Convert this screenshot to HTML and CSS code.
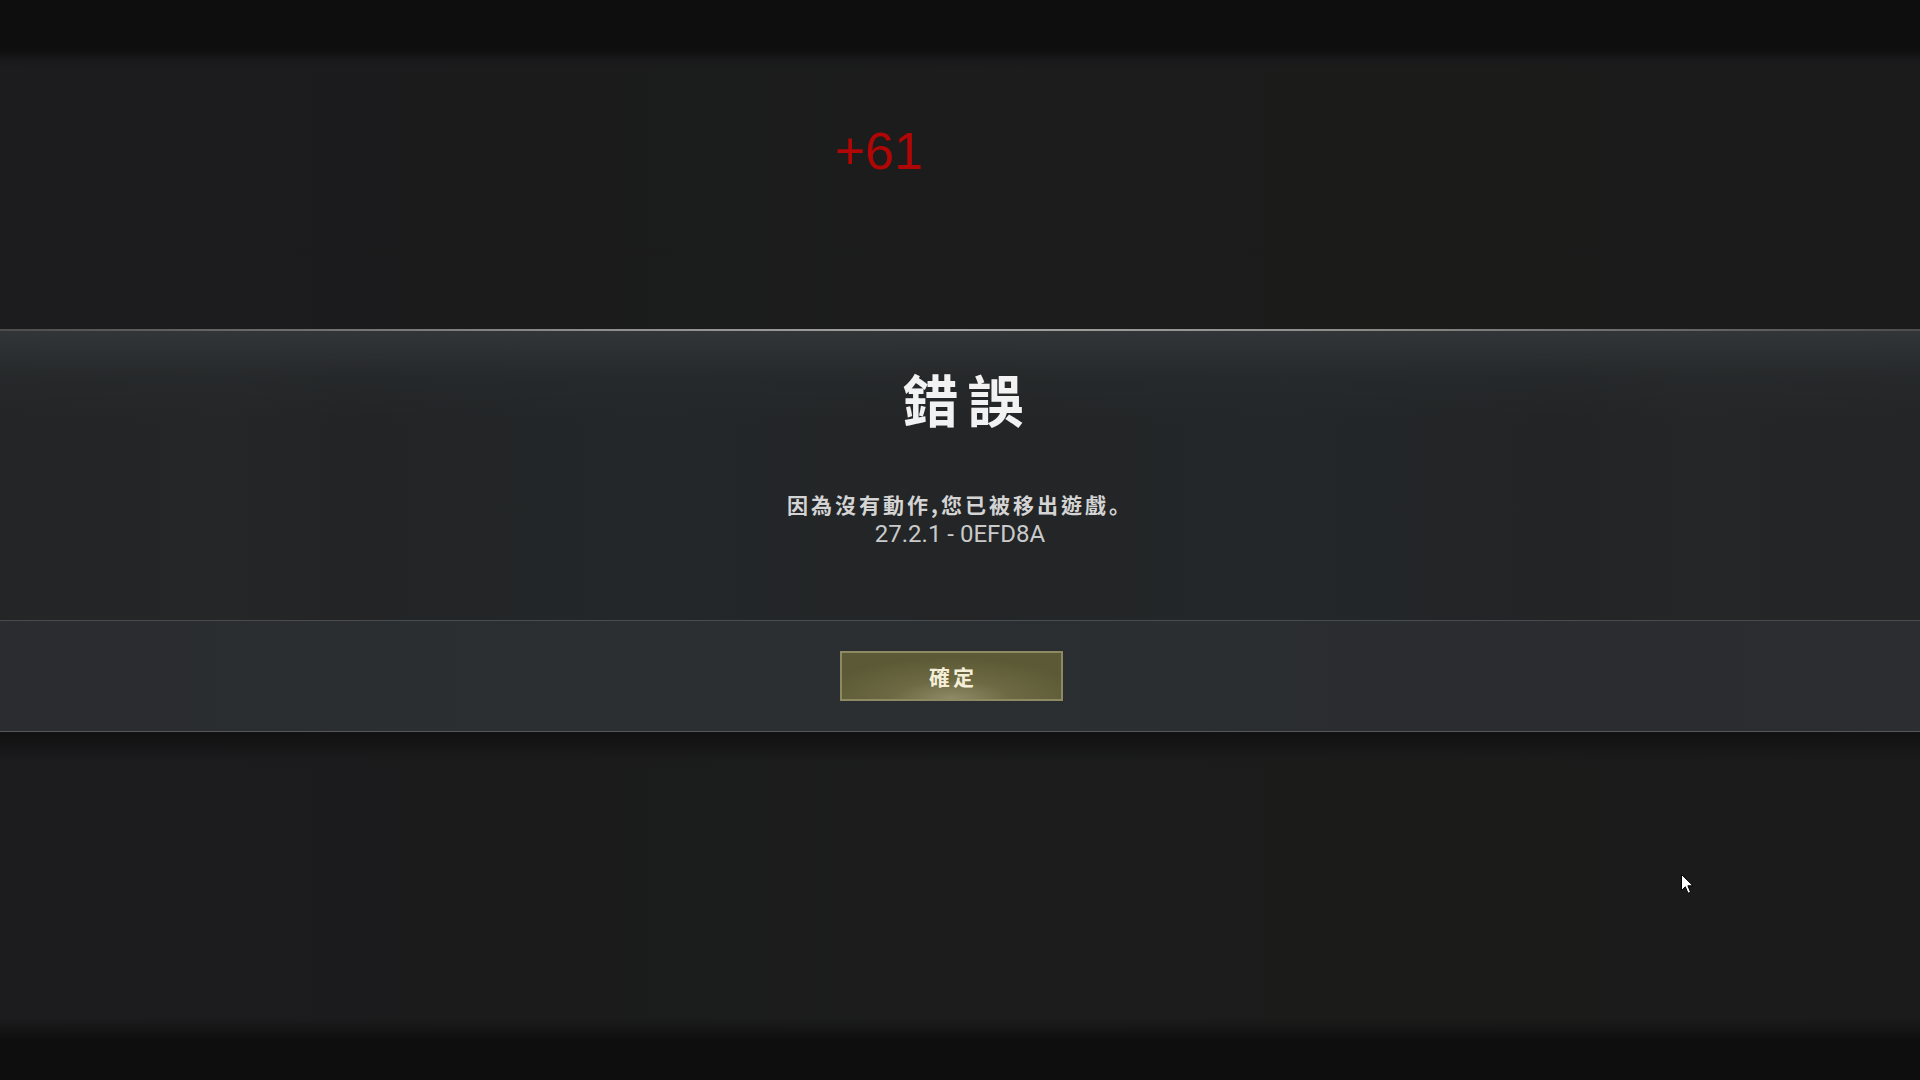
FILE: index.html
```html
<!DOCTYPE html>
<html lang="zh-Hant">
<head>
<meta charset="utf-8">
<title>錯誤</title>
<link rel="stylesheet" href="styles.css">
</head>
<body>
<div class="screen">
  <div class="top-bar"></div>
  <div class="score-area">
    <span class="score">+61</span>
  </div>
  <div class="dialog">
    <div class="dialog-edge"></div>
    <div class="dialog-body">
      <h1 class="dialog-title">錯誤</h1>
      <p class="dialog-msg">因為沒有動作,您已被移出遊戲<span class="stop" lang="zh-Hans">。</span></p>
      <p class="dialog-code">27.2.1 - 0EFD8A</p>
    </div>
    <div class="dialog-foot">
      <button class="ok-btn">確定</button>
    </div>
  </div>
  <div class="below"></div>
  <div class="bottom-bar"></div>
  <svg class="cursor" width="14" height="21" viewBox="0 0 14 21">
    <path d="M0.5 0.5 L0.5 16.5 L4.3 12.8 L7 19.3 L9.6 18.2 L6.9 11.8 L12 11.8 Z" fill="#ffffff" stroke="#000000" stroke-width="1"/>
  </svg>
</div>
</body>
</html>
```
FILE: styles.css
```css
html, body {
  margin: 0;
  padding: 0;
  background: #1b1b1d;
  width: 1920px;
  height: 1080px;
  overflow: hidden;
}

.screen {
  position: relative;
  width: 1920px;
  height: 1080px;
  display: flex;
  flex-direction: column;
  background: linear-gradient(90deg, #1c1b1e 0%, #1b1c1b 50%, #1c1b1b 100%);
}

.top-bar {
  height: 67px;
  flex: none;
  background: linear-gradient(180deg, #0e0e0e 0px, #0e0e0e 50px, #19191b 60px, rgba(27,27,29,0) 67px);
}

.score-area {
  height: 262px;
  flex: none;
  box-sizing: border-box;
  padding-top: 58px;
  padding-left: 835px;
}

.score {
  display: block;
  font-family: "Liberation Sans", Arial, sans-serif;
  font-size: 52px;
  line-height: 52px;
  color: #b00606;
}

.dialog {
  flex: none;
  display: flex;
  flex-direction: column;
}

.dialog-edge {
  height: 2px;
  background: linear-gradient(90deg, #4c4d4e 0%, #8c8c8a 30%, #a3a3a1 50%, #8c8c8a 70%, #4c4d4e 100%);
}

.dialog-body {
  height: 289px;
  box-sizing: border-box;
  padding-top: 39px;
  display: flex;
  flex-direction: column;
  align-items: center;
  background:
    linear-gradient(180deg, rgba(52,55,57,0.9) 0px, rgba(40,43,45,0.6) 45px, rgba(35,37,39,0) 90px),
    linear-gradient(90deg, #232527 0%, #242628 12%, #222426 18%, #242729 33%, #232527 50%, #242729 67%, #222426 82%, #242628 88%, #232527 100%);
}

.dialog-title {
  margin: 0;
  padding-left: 15px;
  font-family: "Noto Sans CJK TC", "Noto Sans CJK SC", sans-serif;
  font-weight: 700;
  font-size: 56px;
  line-height: 56px;
  letter-spacing: 9px;
  color: #f2f2f2;
}

.dialog-msg {
  margin: 66px 0 0 0;
  font-family: "Noto Sans CJK TC", "Noto Sans CJK SC", sans-serif;
  font-weight: 700;
  font-size: 21px;
  line-height: 24px;
  letter-spacing: 3px;
  color: #d4d4d4;
}

.stop {
  font-family: "Noto Sans CJK SC", sans-serif;
}

.dialog-code {
  margin: 4px 0 0 0;
  font-family: Roboto, "Liberation Sans", sans-serif;
  font-size: 24px;
  line-height: 28px;
  color: #cacaca;
}

.dialog-foot {
  height: 110px;
  border-top: 1px solid #4a4d4f;
  border-bottom: 1px solid #55585a;
  display: flex;
  align-items: center;
  justify-content: center;
  padding-right: 17px;
  background: linear-gradient(90deg, #2a2c2f 0%, #2b2e31 20%, #2c2f31 40%, #2b2e31 60%, #2a2c2f 80%, #2b2d30 100%);
}

.ok-btn {
  width: 223px;
  height: 50px;
  box-sizing: border-box;
  border: 2px solid #8d8963;
  background: radial-gradient(ellipse 60% 90% at 50% 100%, #8f8b66 0%, #6c6943 45%, #5c5936 100%);
  font-family: "Noto Sans CJK TC", "Noto Sans CJK SC", sans-serif;
  font-weight: 700;
  font-size: 21px;
  letter-spacing: 3px;
  padding: 0 0 0 3px;
  color: #f4efd6;
  line-height: 1;
}

.below {
  flex: 1;
  background: linear-gradient(180deg, #111111 0px, #151516 12px, rgba(27,27,29,0) 30px);
}

.bottom-bar {
  height: 62px;
  flex: none;
  background: linear-gradient(180deg, rgba(14,14,14,0) 0px, #151515 12px, #0e0e0e 22px, #0e0e0e 62px);
}

.cursor {
  position: absolute;
  left: 1681px;
  top: 874px;
}
```
